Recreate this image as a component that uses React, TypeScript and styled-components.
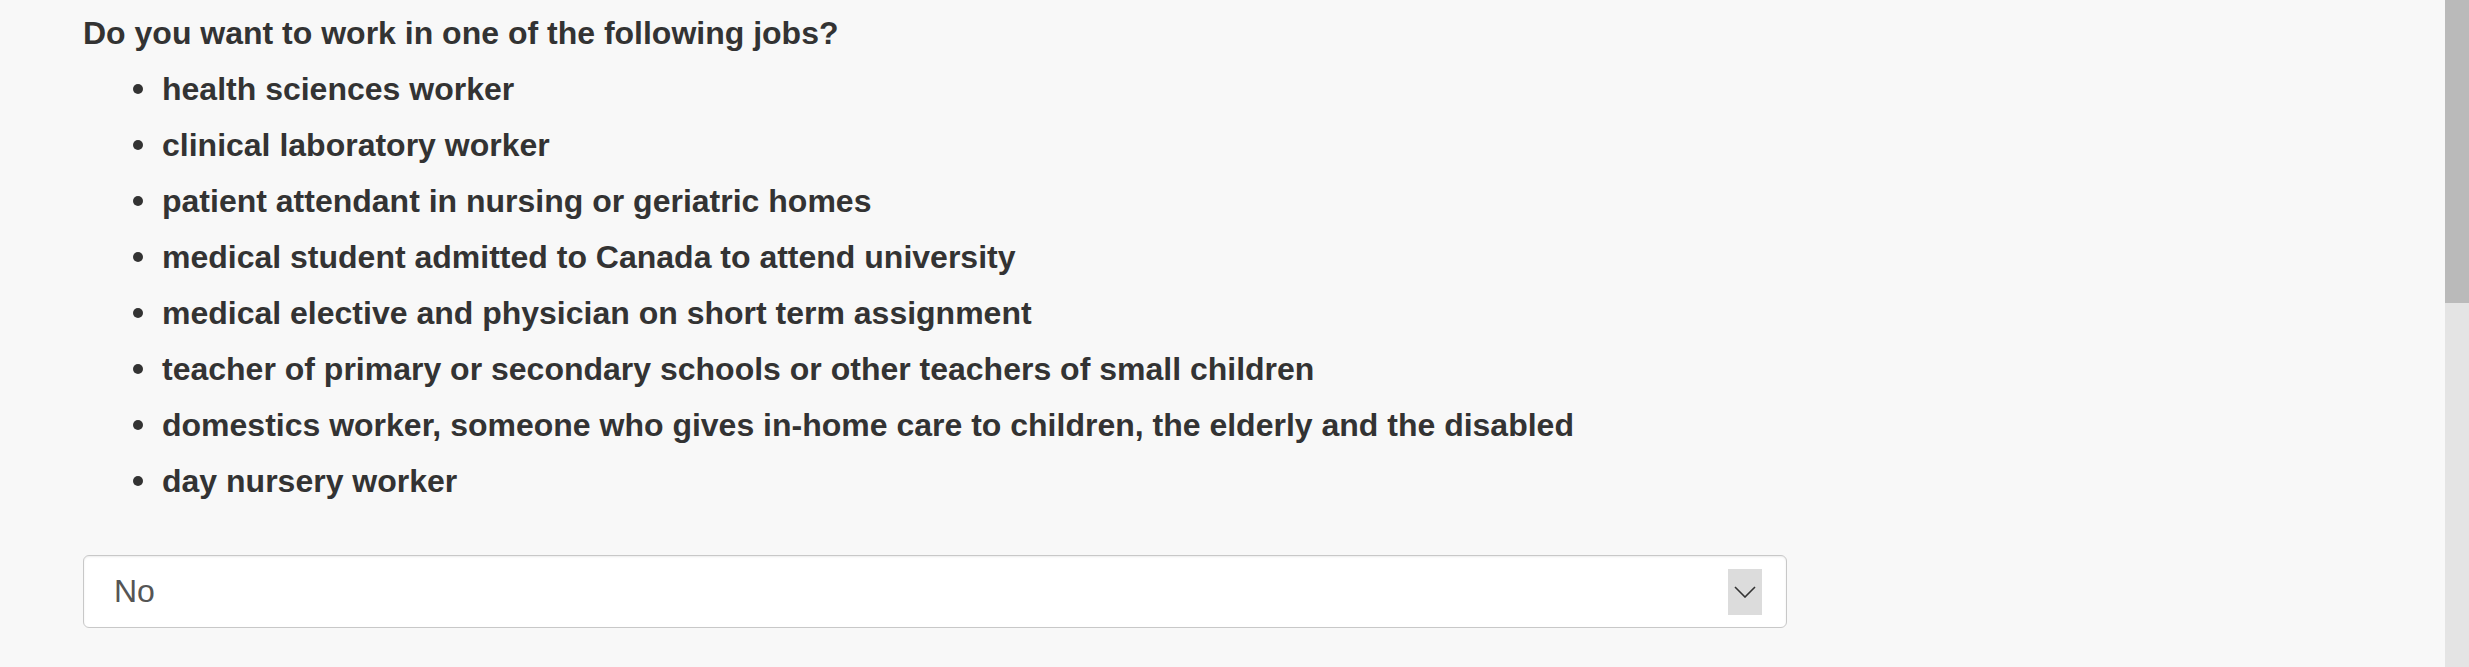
import React from "react";
import styled, { createGlobalStyle } from "styled-components";

const GlobalStyle = createGlobalStyle`
  html, body {
    margin: 0;
    padding: 0;
    background: #f8f8f8;
  }
  body {
    font-family: "Liberation Sans", Arial, sans-serif;
    color: #333333;
  }
`;

const Page = styled.div`
  display: flex;
  flex-direction: row;
  width: 100%;
  height: 667px;
  overflow: hidden;
  background: #f8f8f8;
`;

const Content = styled.main`
  flex: 1;
  display: flex;
  flex-direction: column;
  align-items: flex-start;
  padding: 10px 0 0 83px;
`;

const Question = styled.p`
  margin: 0;
  font-size: 32px;
  line-height: 46px;
  font-weight: 700;
  color: #333333;
`;

const JobList = styled.ul`
  list-style: none;
  margin: 10px 0 0 0;
  padding: 0;
  display: flex;
  flex-direction: column;
  gap: 10px;
`;

const JobItem = styled.li`
  display: flex;
  align-items: flex-start;
  font-size: 32px;
  line-height: 46px;
  font-weight: 700;
  color: #333333;

  &::before {
    content: "";
    flex: none;
    width: 10px;
    height: 10px;
    margin: 18px 19px 0 50px;
    border-radius: 50%;
    background: #333333;
  }
`;

const SelectBox = styled.div`
  box-sizing: border-box;
  margin-top: 51px;
  width: 1704px;
  height: 73px;
  display: flex;
  align-items: center;
  justify-content: space-between;
  padding: 0 24px 0 30px;
  background: #ffffff;
  border: 1px solid #c8c8c8;
  border-radius: 6px;
  box-shadow: inset 0 1px 2px rgba(0, 0, 0, 0.075);
  cursor: pointer;
`;

const SelectValue = styled.span`
  font-size: 32px;
  font-weight: 400;
  color: #555555;
`;

const ArrowBox = styled.span`
  width: 34px;
  height: 46px;
  display: flex;
  align-items: center;
  justify-content: center;
  background: #dcdcdc;
`;

const ScrollBar = styled.div`
  flex: none;
  width: 24px;
  display: flex;
  flex-direction: column;
  background: #e4e4e4;
`;

const ScrollThumb = styled.div`
  height: 303px;
  background: #bababa;
`;

const jobs = [
  "health sciences worker",
  "clinical laboratory worker",
  "patient attendant in nursing or geriatric homes",
  "medical student admitted to Canada to attend university",
  "medical elective and physician on short term assignment",
  "teacher of primary or secondary schools or other teachers of small children",
  "domestics worker, someone who gives in-home care to children, the elderly and the disabled",
  "day nursery worker",
];

export default function App() {
  return (
    <>
      <GlobalStyle />
      <Page>
        <Content>
          <Question>Do you want to work in one of the following jobs?</Question>
          <JobList>
            {jobs.map((job) => (
              <JobItem key={job}>{job}</JobItem>
            ))}
          </JobList>
          <SelectBox role="combobox" aria-expanded="false">
            <SelectValue>No</SelectValue>
            <ArrowBox>
              <svg width="22" height="12" viewBox="0 0 22 12" fill="none">
                <path d="M1 1 L11 11 L21 1" stroke="#333333" strokeWidth="1.6" />
              </svg>
            </ArrowBox>
          </SelectBox>
        </Content>
        <ScrollBar>
          <ScrollThumb />
        </ScrollBar>
      </Page>
    </>
  );
}
